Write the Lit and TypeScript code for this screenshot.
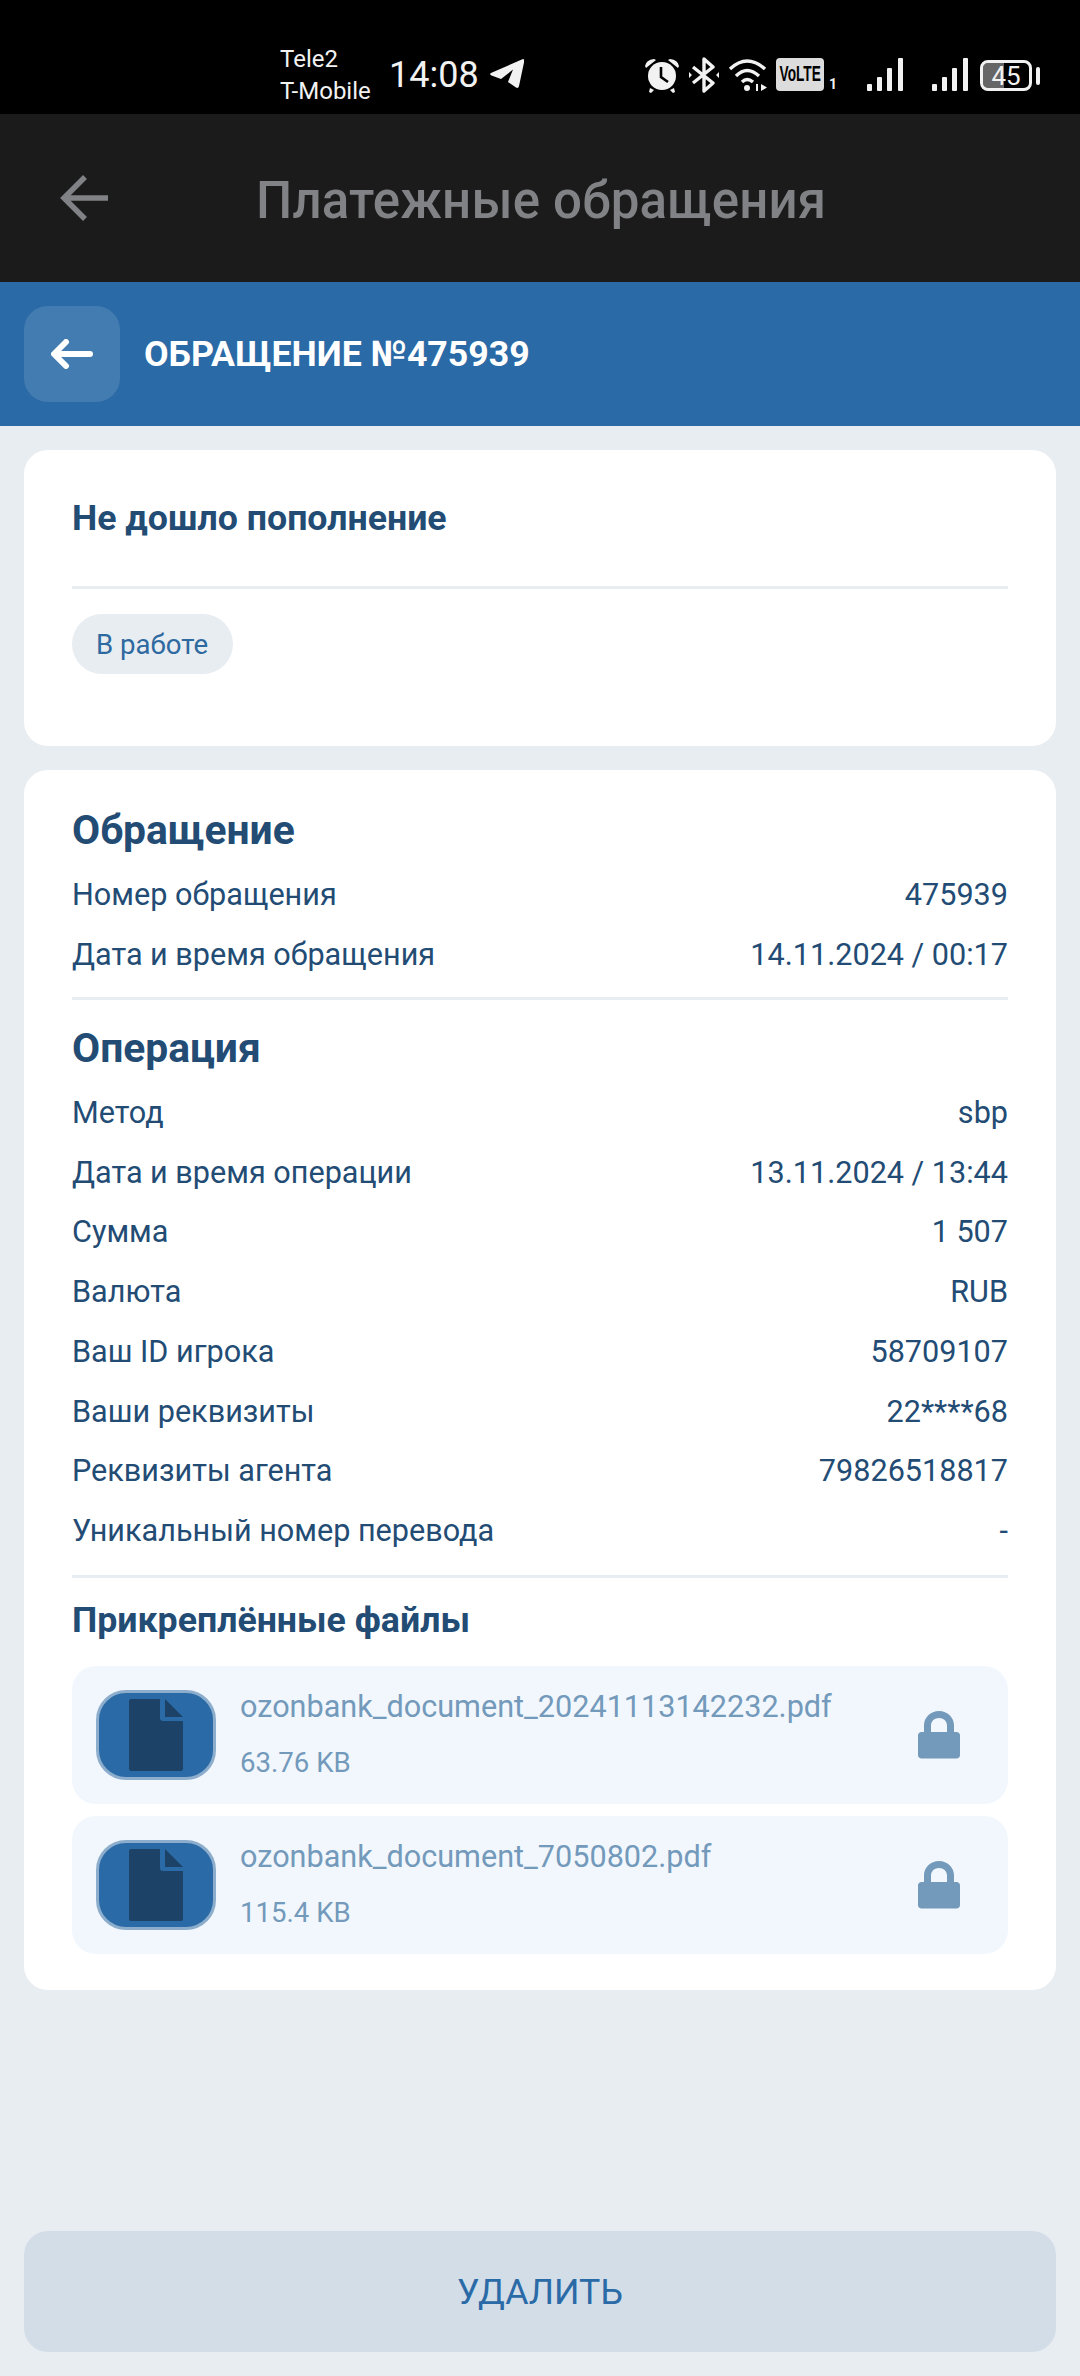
import { LitElement, html, css, svg } from "lit";
import { customElement } from "lit/decorators.js";

const signal = svg`<svg class="sig" width="36" height="34" viewBox="0 0 36 34"><g fill="#f2f2f2"><rect x="0" y="26" width="5" height="7" rx="1"/><rect x="10" y="19" width="5" height="14" rx="1"/><rect x="20" y="10" width="5" height="23" rx="1"/><rect x="31" y="0" width="5" height="33" rx="1"/></g></svg>`;

const lock = svg`<svg width="42" height="48" viewBox="0 0 42 48"><path fill="#7399bb" d="M6 21v-6.500C6 6.500 12.500 0 21 0s15 6.500 15 14.500V21h2.500c2 0 3.500 1.500 3.500 3.500V44c0 2-1.500 3.500-3.500 3.500h-35C1.500 47.500 0 46 0 44V24.500C0 22.500 1.500 21 3.500 21zM13 21h16v-6.500C29 10 25.500 7 21 7s-8 3-8 7.500z"/></svg>`;

const fileIcon = svg`<svg width="54" height="72" viewBox="0 0 54 72"><path fill="#1c4367" d="M2 0h29v19a3 3 0 0 0 3 3h20v48a2 2 0 0 1-2 2H2a2 2 0 0 1-2-2V2a2 2 0 0 1 2-2z"/><path fill="#1c4367" d="M36 0l18 18H36z"/></svg>`;

@customElement("app-root")
export class AppRoot extends LitElement {
  static styles = css`
    :host { display: block; width: 1080px; height: 2376px; background: #e8edf2; font-family: Roboto, "Noto Sans", sans-serif; color: #234c75; overflow: hidden; }
    .page { display: flex; flex-direction: column; height: 2376px; }
    .status { height: 114px; background: #000; color: #f2f2f2; display: flex; align-items: flex-start; flex: none; position: relative; }
    .carriers { margin: 43px 0 0 280px; font-size: 24px; line-height: 32px; width: 110px; }
    .time { font-size: 36px; margin: 54px 0 0 -1px; line-height: 42px; }
    .plane { margin: 59px 0 0 11px; }
    .sicons { margin: 57px 0 0 auto; padding-right: 40px; display: flex; align-items: flex-start; }
    .sig { display: block; margin-top: 1px; }
    .volte { margin-left: 8px; margin-top: 1px; width: 48px; height: 33px; background: #dcdcdc; border-radius: 4px; color: #000; font: 700 18px "Liberation Sans", sans-serif; display: flex; align-items: center; justify-content: center; overflow: hidden; }
    .volte span { display: inline-block; transform: scale(.76, 1.25); }
    .sim { font-size: 14px; font-weight: 700; margin: 20px 0 0 5px; line-height: 14px; width: 8px; }
    .battery { margin-left: 12px; margin-top: 3px; width: 52px; height: 31px; box-sizing: border-box; border: 3px solid #f2f2f2; border-radius: 8px; display: flex; align-items: center; justify-content: center; font-size: 26px; color: #f2f2f2; background: linear-gradient(90deg, #666 0, #666 45%, transparent 45%); background-clip: padding-box; }
    .nub { margin: 10px 0 0 4px; width: 4px; height: 18px; background: #f2f2f2; border-radius: 2px; }
    .appbar { height: 168px; background: #1b1b1b; display: flex; align-items: center; flex: none; }
    .appbar svg { margin-left: 60px; }
    .appbar .t { margin-left: 146px; margin-top: 5px; font-size: 51px; font-weight: 500; color: #808285; letter-spacing: .2px; }
    .blue { height: 144px; background: #2a6aa6; display: flex; align-items: center; padding-left: 24px; gap: 24px; flex: none; }
    .back { width: 96px; height: 96px; border-radius: 24px; background: rgba(255,255,255,.12); display: flex; align-items: center; justify-content: center; }
    .blue .t { color: #fff; font-size: 35.700px; font-weight: 700; }
    .content { padding: 24px 24px 0; display: flex; flex-direction: column; gap: 24px; }
    .card { background: #fff; border-radius: 24px; padding: 0 48px; }
    .c1 { height: 296px; box-sizing: border-box; }
    .c1 h2 { margin: 0; font-size: 35.700px; font-weight: 700; box-sizing: border-box; border-bottom: 3px solid #e8edf2; height: 139px; line-height: 136px; }
    .pill { display: inline-flex; align-items: center; margin-top: 25px; height: 60px; padding: 0 25px 0 24px; border-radius: 30px; background: #e8edf2; color: #2e6a9f; font-size: 27.600px; }
    .c2 { height: 1220px; box-sizing: border-box; padding-top: 32px; }
    h3 { margin: 0; font-size: 40.800px; line-height: 56px; font-weight: 700; }
    .rows { display: flex; flex-direction: column; }
    .row { display: flex; justify-content: space-between; align-items: center; height: 59.740px; font-size: 30.600px; color: #234c75; }
    hr { margin: 0; border: 0; height: 3px; background: #e8edf2; }
    .sec1 .rows { margin-top: 7px; }
    .sec1 hr { margin-top: 13px; }
    .op { margin-top: 20px; }
    .sec2 { margin-top: 6px; }
    .sec2end { margin-top: 15px; }
    .h4 { font-size: 35.700px; font-weight: 700; line-height: 44px; margin: 20px 0 24px; }
    .file { height: 138px; border-radius: 24px; background: #f1f7fc; display: flex; align-items: center; padding: 0 48px 0 24px; margin-bottom: 12px; }
    .thumb { width: 120px; height: 90px; box-sizing: border-box; border: 3px solid #8dadcd; border-radius: 30px; background: #2a6aa6; display: flex; align-items: center; justify-content: center; flex: none; }
    .fi { margin-left: 24px; flex: 1; color: #7399bb; }
    .fn { font-size: 30.600px; line-height: 40px; margin-top: -5px; }
    .fs { font-size: 27.600px; line-height: 32px; margin-top: 20px; }
    .spacer { flex: 1; }
    .del { height: 121px; margin: 0 24px 24px; border-radius: 24px; background: #d3dde8; color: #2a6aa6; display: flex; align-items: center; justify-content: center; font-size: 35.700px; flex: none; }
  `;

  rows(list: [string, string][], cls = "") {
    return html`<div class="rows ${cls}">${list.map(([a, b]) => html`<div class="row"><span>${a}</span><span>${b}</span></div>`)}</div>`;
  }

  file(name: string, size: string) {
    return html`<div class="file">
      <div class="thumb">${fileIcon}</div>
      <div class="fi"><div class="fn">${name}</div><div class="fs">${size}</div></div>
      ${lock}
    </div>`;
  }

  render() {
    return html`<div class="page">
      <div class="status">
        <div class="carriers">Tele2<br />T-Mobile</div>
        <div class="time">14:08</div>
        <svg class="plane" width="34" height="30" viewBox="0 0 34 30"><path fill="#f2f2f2" d="M33 0c1 0 1.500 1 1.200 2.500L29 27c-.4 1.800-1.500 2.400-3 1.500l-8-5.500 5-12.500L11 20 1.500 16.500C-.5 15.700-.5 14.500 1.500 13.700z"/></svg>
        <div class="sicons">
          <svg width="34" height="36" viewBox="0 0 34 36"><g fill="#f2f2f2"><circle cx="17" cy="19" r="14"/><path d="M0 9q1-6 9-7l2 1-10 8zM34 9q-1-6-9-7l-2 1 10 8zM5 31l4 2-3 3-2-1zM29 31l-4 2 3 3 2-1z"/></g><path d="M16 10v10l7 5" fill="none" stroke="#000" stroke-width="2.600"/></svg>
          <svg style="margin-left:10px" width="30" height="36" viewBox="0 0 30 36"><path d="M4 10l20 16-9 8V2l9 8L4 26" fill="none" stroke="#f2f2f2" stroke-width="3.400" stroke-linejoin="round"/><path d="M0 15l3 3-3 3zM30 15l-3 3 3 3z" fill="#f2f2f2"/></svg>
          <svg style="margin-left:9px" width="40" height="36" viewBox="0 0 40 36"><g fill="none" stroke="#f2f2f2" stroke-width="3.400"><path d="M2 12Q19-4 37 12"/><path d="M8 19Q19 8 31 19"/><path d="M14 25Q19 20 25 25"/></g><circle cx="19" cy="31" r="3" fill="#f2f2f2"/><path d="M28 27h2v7h-2zM33 27l6 3.500-6 3.500z" fill="#f2f2f2"/></svg>
          <div class="volte"><span>VoLTE</span></div>
          <div class="sim">1</div>
          <div style="margin-left:30px">${signal}</div>
          <div style="margin-left:29px">${signal}</div>
          <div class="battery">45</div>
          <div class="nub"></div>
        </div>
      </div>
      <div class="appbar">
        <svg width="50" height="50" viewBox="0 0 50 50"><path d="M48 25H4M25 4L4 25l21 21" fill="none" stroke="#808285" stroke-width="5.500"/></svg>
        <div class="t">Платежные обращения</div>
      </div>
      <div class="blue">
        <div class="back"><svg width="42" height="30" viewBox="0 0 42 30"><path d="M39 15H4M15 3L3 15l12 12" fill="none" stroke="#fff" stroke-width="6" stroke-linecap="round" stroke-linejoin="round"/></svg></div>
        <div class="t">ОБРАЩЕНИЕ №475939</div>
      </div>
      <div class="content">
        <div class="card c1">
          <h2>Не дошло пополнение</h2>
          <div class="pill">В работе</div>
        </div>
        <div class="card c2">
          <div class="sec1">
            <h3>Обращение</h3>
            ${this.rows([["Номер обращения", "475939"], ["Дата и время обращения", "14.11.2024 / 00:17"]])}
            <hr />
          </div>
          <h3 class="op">Операция</h3>
          ${this.rows([
            ["Метод", "sbp"],
            ["Дата и время операции", "13.11.2024 / 13:44"],
            ["Сумма", "1 507"],
            ["Валюта", "RUB"],
            ["Ваш ID игрока", "58709107"],
            ["Ваши реквизиты", "22****68"],
            ["Реквизиты агента", "79826518817"],
            ["Уникальный номер перевода", "-"],
          ], "sec2")}
          <hr class="sec2end" />
          <div class="h4">Прикреплённые файлы</div>
          ${this.file("ozonbank_document_20241113142232.pdf", "63.76 KB")}
          ${this.file("ozonbank_document_7050802.pdf", "115.4 KB")}
        </div>
      </div>
      <div class="spacer"></div>
      <div class="del">УДАЛИТЬ</div>
    </div>`;
  }
}
